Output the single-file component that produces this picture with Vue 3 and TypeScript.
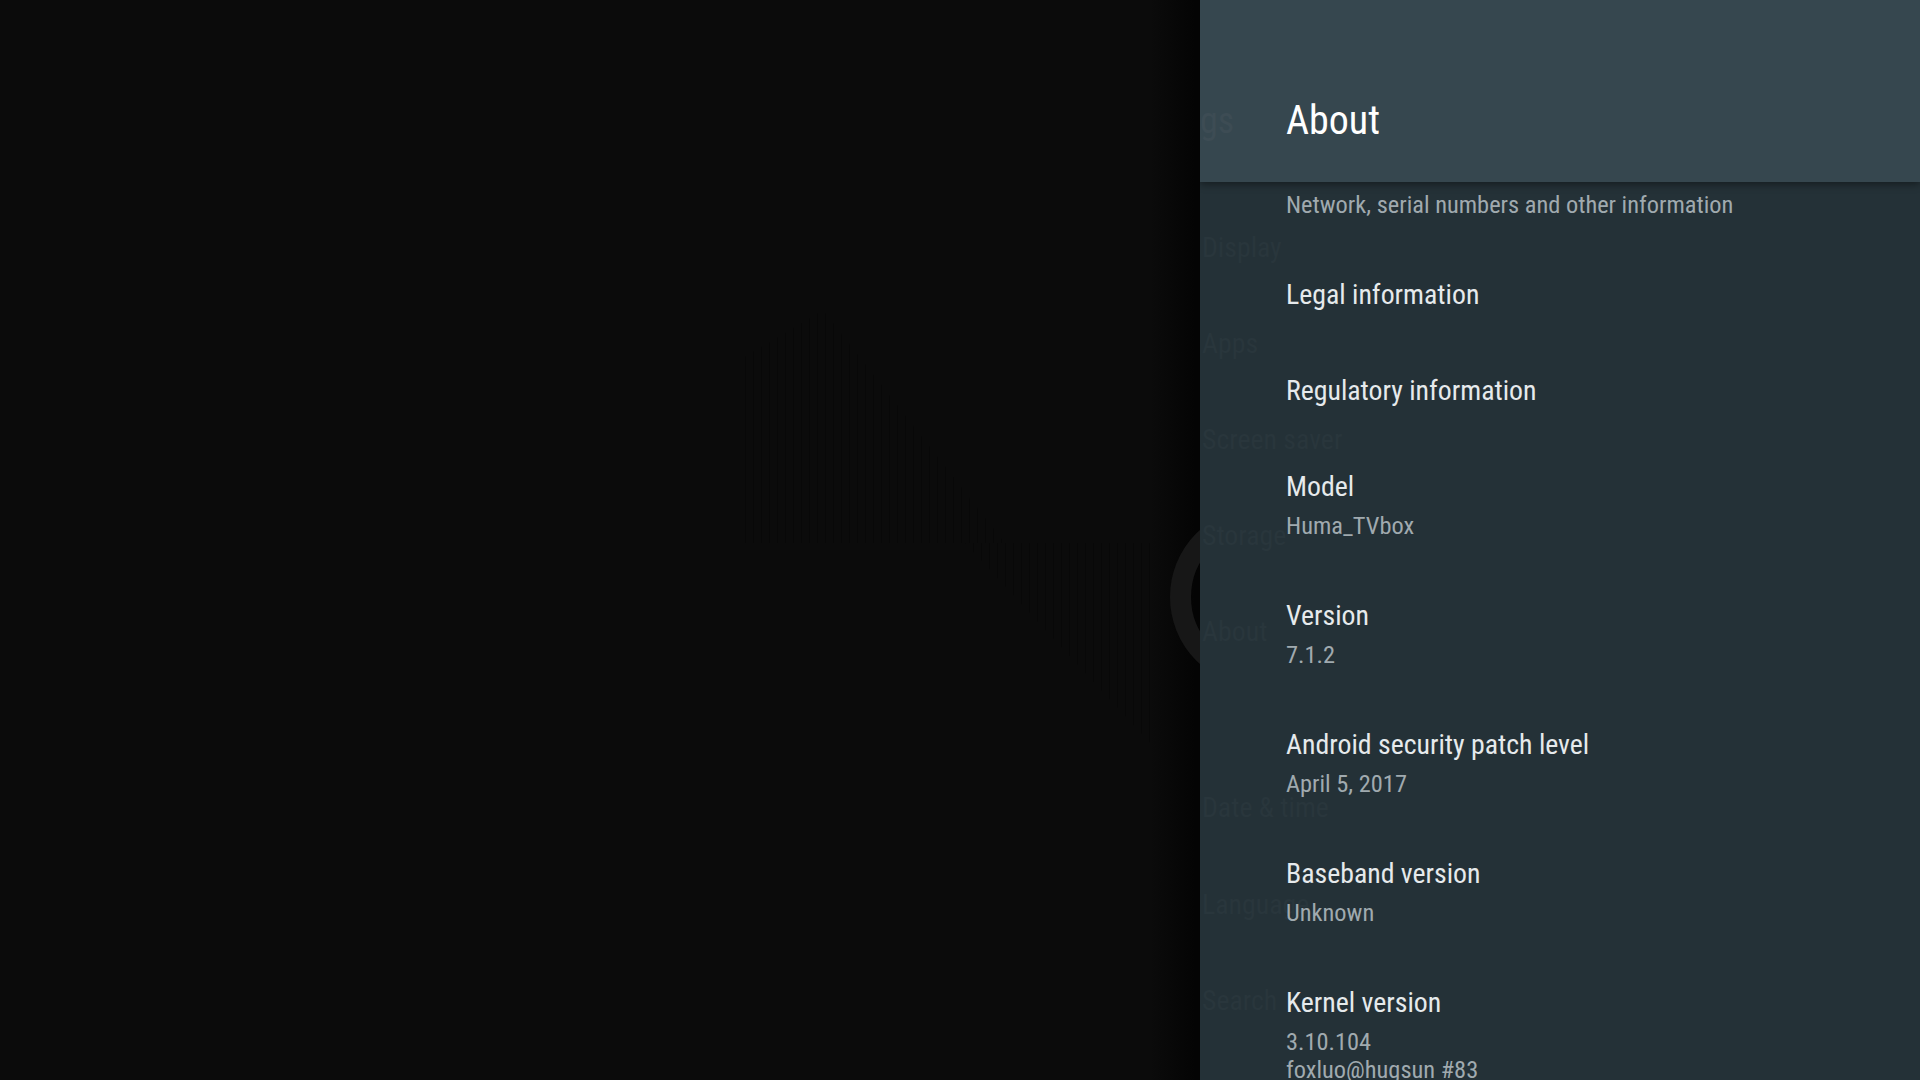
<script setup lang="ts">
interface Row { title?: string; lines: string[]; kind: string }
const rows: Row[] = [
  { lines: ['Network, serial numbers and other information'], kind: 'lead' },
  { title: 'Legal information', lines: [], kind: 'single' },
  { title: 'Regulatory information', lines: [], kind: 'single' },
  { title: 'Model', lines: ['Huma_TVbox'], kind: 'double' },
  { title: 'Version', lines: ['7.1.2'], kind: 'double' },
  { title: 'Android security patch level', lines: ['April 5, 2017'], kind: 'double' },
  { title: 'Baseband version', lines: ['Unknown'], kind: 'double' },
  { title: 'Kernel version', lines: ['3.10.104', 'foxluo@hugsun #83'], kind: 'double' },
]
const ghosts = [
  { text: 'Display', top: 231 },
  { text: 'Apps', top: 327 },
  { text: 'Screen saver', top: 423 },
  { text: 'Storage', top: 519 },
  { text: 'About', top: 615 },
  { text: 'Date & time', top: 791 },
  { text: 'Language', top: 888 },
  { text: 'Search', top: 984 },
]
</script>

<template>
  <div class="screen">
    <div class="ring"></div>
    <div class="streaks streaks-a"></div>
    <div class="streaks streaks-b"></div>
    <aside class="panel">
      <div class="ghosts">
        <span class="ghost ghost-title">gs</span>
        <span v-for="g in ghosts" :key="g.text" class="ghost" :style="{ top: g.top + 'px' }">{{ g.text }}</span>
      </div>
      <header class="head"><h1 class="head-title">About</h1></header>
      <div class="list">
        <div v-for="(r, i) in rows" :key="i" class="row" :class="r.kind">
          <div v-if="r.title" class="title">{{ r.title }}</div>
          <div v-for="l in r.lines" :key="l" class="value">{{ l }}</div>
        </div>
      </div>
    </aside>
  </div>
</template>

<style>
html, body { margin: 0; background: #0a0a0a; overflow: hidden; }
</style>

<style scoped>
.screen {
  position: relative;
  width: 1920px;
  height: 1080px;
  overflow: hidden;
  display: flex;
  justify-content: flex-end;
  background: linear-gradient(90deg, #0b0b0b 0, #0b0b0b 1150px, #040404 1195px, #040404 1200px);
  font-family: "Roboto Condensed", "Liberation Sans Narrow", Roboto, sans-serif;
  font-stretch: 75%;
}
.ring {
  position: absolute;
  left: 1170px;
  top: 507px;
  width: 138px;
  height: 138px;
  border: 21px solid #171717;
  border-radius: 50%;
}
.streaks {
  position: absolute;
  background: repeating-linear-gradient(90deg, #080808 0 1px, transparent 1px 8px);
}
.streaks-a {
  left: 745px;
  top: 310px;
  width: 260px;
  height: 233px;
  clip-path: polygon(0 20%, 30% 0, 100% 100%, 0 100%);
}
.streaks-b {
  left: 965px;
  top: 543px;
  width: 185px;
  height: 200px;
  clip-path: polygon(0 0, 100% 0, 100% 100%);
}
.panel {
  position: relative;
  width: 720px;
  height: 1080px;
  overflow: hidden;
  background: #243137;
  display: flex;
  flex-direction: column;
}
.ghosts {
  position: absolute;
  inset: 0;
}
.ghost {
  position: absolute;
  left: 2px;
  font-size: 27.8px;
  line-height: 34px;
  white-space: nowrap;
  color: #29363c;
}
.ghost-title {
  left: 0;
  top: 99px;
  font-size: 36px;
  line-height: 44px;
  color: #3d4c54;
  z-index: 2;
}
.head {
  position: relative;
  z-index: 1;
  flex: none;
  height: 182px;
  background: #36474f;
  box-shadow: 0 2px 8px rgba(0, 0, 0, 0.45);
  padding: 97px 0 0 86px;
  box-sizing: border-box;
}
.head-title {
  margin: 0;
  font-size: 40px;
  font-weight: 400;
  line-height: 48px;
  color: #fff;
}
.list {
  position: relative;
  padding-left: 86px;
  padding-top: 9px;
}
.row { box-sizing: border-box; }
.lead { height: 56px; }
.single { height: 96px; padding-top: 30px; }
.double { height: 129px; padding-top: 30px; }
.title {
  font-size: 27.8px;
  line-height: 36px;
  color: #e6eaec;
  white-space: nowrap;
}
.value {
  font-size: 24.4px;
  line-height: 28px;
  color: #a0aaaf;
  white-space: nowrap;
}
.double .title { margin-bottom: 7px; }
</style>
